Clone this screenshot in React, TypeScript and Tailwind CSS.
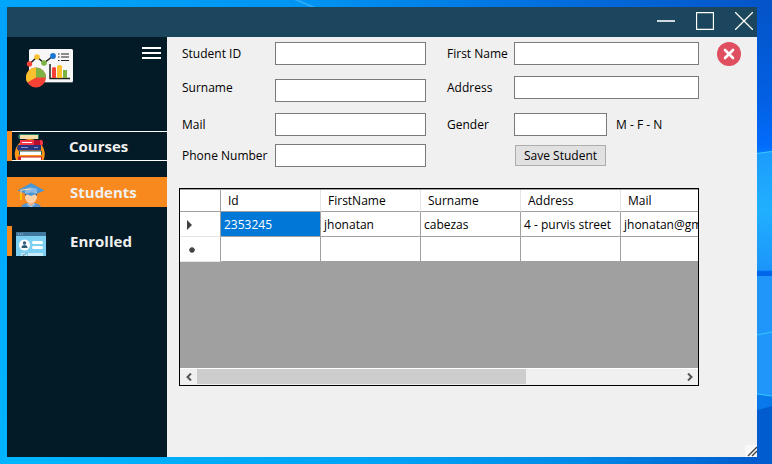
import React from 'react';

const columns = ['Id', 'FirstName', 'Surname', 'Address', 'Mail'];
const student = ['2353245', 'jhonatan', 'cabezas', '4 - purvis street', 'jhonatan@gmail.com'];

function Desktop() {
  return (
    <svg className="absolute inset-0 h-full w-full" viewBox="0 0 772 464" preserveAspectRatio="none" aria-hidden="true">
      <defs>
        <linearGradient id="sky">
          <stop offset="0" stopColor="#00a6fb" />
          <stop offset="0.4" stopColor="#0094f2" />
          <stop offset="0.7" stopColor="#0070e0" />
          <stop offset="1" stopColor="#0454c8" />
        </linearGradient>
        <linearGradient id="ground">
          <stop offset="0" stopColor="#00b6ff" />
          <stop offset="0.5" stopColor="#00a2f6" />
          <stop offset="0.75" stopColor="#008ae8" />
          <stop offset="1" stopColor="#0058cc" />
        </linearGradient>
        <linearGradient id="side" x1="0" y1="0" x2="0" y2="1">
          <stop offset="0" stopColor="#00a2fb" />
          <stop offset="1" stopColor="#00b4ff" />
        </linearGradient>
        <linearGradient id="edge" x1="0" y1="0" x2="0" y2="1">
          <stop offset="0" stopColor="#0454c8" />
          <stop offset="0.2" stopColor="#0260e4" />
          <stop offset="0.3" stopColor="#026cfc" />
          <stop offset="0.33" stopColor="#0a8cfc" />
        </linearGradient>
        <linearGradient id="pane" x1="0" y1="0" x2="0" y2="1">
          <stop offset="0" stopColor="#1c9cfc" />
          <stop offset="0.5" stopColor="#20b0ff" />
          <stop offset="1" stopColor="#1c94fa" />
        </linearGradient>
      </defs>
      <path fill="url(#sky)" d="M0 0h772v232H0z" />
      <path fill="url(#ground)" d="M0 232h772v232H0z" />
      <path fill="url(#side)" d="M0 7h7v457H0z" />
      <path stroke="#2aa8f8" strokeWidth="2" d="m292-2 28 12" />
      <path fill="url(#edge)" d="M757 7h15v464h-15z" />
      <path fill="url(#pane)" d="M757 153l15-2v119h-15z" />
      <path fill="#0068e8" d="M757 271h15v5h-15z" />
      <path fill="#2196fa" d="M757 276h15v120l-15-2z" />
      <path fill="#0878ea" d="M757 394l15 2v10l-15 4z" />
      <path fill="#005ccf" d="M757 410l15-4v58h-15z" />
      <path fill="none" stroke="#36c6ff" d="M757 153.500l15-2M757 335l15-3M757 394l15 2" />
    </svg>
  );
}

function ChartLogo() {
  return (
    <svg width="48" height="40" viewBox="0 0 48 40" aria-hidden="true">
      <rect x="3" y="1" width="44" height="33" rx="1.500" fill="#53636d" />
      <rect x="3" y="0" width="44" height="33" rx="1.500" fill="#f7f7f7" />
      <path d="M3.500 15 11 8l7 6 9-7" fill="none" stroke="#222" strokeWidth="1.500" />
      <circle cx="3.500" cy="15" r="2.700" fill="#f44336" />
      <circle cx="11" cy="8" r="2.800" fill="#fbc02d" />
      <circle cx="18" cy="14" r="2.800" fill="#7cb342" />
      <circle cx="27" cy="7" r="2.900" fill="#1976d2" />
      <path d="M32 5h1.500M35 5h8M32 8h1.500M35 8h8M32 11.500h1.500M35 11.500h8" stroke="#222" strokeWidth="1.100" />
      <path d="M24 15v14.500h20" fill="none" stroke="#222" strokeWidth="1.500" />
      <path d="M26 19q2-2 4 0v10h-4z" fill="#f44336" />
      <path d="M31 17q2.500-2 5 0v12h-5z" fill="#fbc02d" />
      <path d="M37 21h4v8h-4z" fill="#7cb342" />
      <circle cx="10" cy="28.500" r="10" fill="#f44336" />
      <path d="M10 28.500V18.500a10 10 0 0 0-8.700 15z" fill="#fbc02d" />
      <path d="M10 28.500V18.500a10 10 0 0 1 10 10z" fill="#7cb342" />
    </svg>
  );
}

function BooksIcon() {
  return (
    <svg width="32" height="26" viewBox="0 0 32 26" aria-hidden="true">
      <path d="M2 26A15 15 0 1 1 29.500 26z" fill="#ff9419" />
      <path d="M5 0h20v5H5L4 2.500z" fill="#257d68" />
      <path d="M6 1h18v4H6z" fill="#f5dda9" />
      <path d="M6 6h22l1 2v2l-1 1.500H6z" fill="#f23445" />
      <path d="M20 6h6v5.500h-6z" fill="#b30d30" />
      <path d="M8 8.500h10" stroke="#fff" />
      <path d="M4 11h23v5.500H4l-1-2z" fill="#29347e" />
      <path d="M7 13.500h7M20 13.500h4" stroke="#8192ce" />
      <path d="M5 17h23v4H5z" fill="#1b6457" />
      <path d="M6 17.500h21V21H6z" fill="#fff" />
      <path d="M4 22.500h24V26H4z" fill="#c82131" />
      <path d="M7 23.500h20V26H7z" fill="#fff" />
    </svg>
  );
}

function GraduateIcon() {
  return (
    <svg width="32" height="26" viewBox="0 0 32 26" aria-hidden="true">
      <path d="M6 26q1-3 6-4h8q5 1 6 4z" fill="#5394cf" />
      <path d="M13 19h6v4l-3 2-3-2z" fill="#f2b58b" />
      <ellipse cx="16" cy="16" rx="6" ry="6" fill="#ffd1a9" />
      <path d="M10 15V9h12v6l-2-2h-8z" fill="#314a61" />
      <path d="M16 2 29.500 9.500 16 15 2.500 9.500z" fill="#4c96d5" />
      <path d="M10 8q6-3 12 0v5q-6-3-12 0z" fill="#8cbae4" />
      <path d="M16 8 6 9v6" fill="none" stroke="#f5d9a4" />
      <path d="M5 13h2v6H5z" fill="#ffc400" />
      <path d="m12 23 4 3 4-3" fill="none" stroke="#bbdaf3" />
    </svg>
  );
}

function EnrolledIcon() {
  return (
    <svg width="30" height="24" viewBox="0 0 30 24" aria-hidden="true">
      <path d="M0 0h30v24H0z" fill="#7ed0f2" />
      <path d="M0 0h30v4H0z" fill="#41789e" />
      <path d="M2 2h1M4 2h1M6 2h1" stroke="#a4c0d2" />
      <circle cx="8.500" cy="13" r="5.500" fill="#fff" />
      <circle cx="8.500" cy="11" r="1.700" fill="#315d7c" />
      <path d="M5.500 16q0-3 3-3t3 3z" fill="#315d7c" />
      <path d="M17.500 10.500h8M17.500 15.500h8" stroke="#fff" strokeWidth="3" strokeLinecap="round" />
      <path d="M5 21h6v3H5zM12 21h15v3H12z" fill="#c7ebfa" />
      <path d="m6.500 22.500 1.500 1 2.500-2.500" fill="none" stroke="#41789e" />
    </svg>
  );
}

function TextField({ id, className = '' }: { id: string; className?: string }) {
  return <input id={id} type="text" className={`h-[23px] min-w-0 border border-[#7a7a7a] bg-white px-1 outline-none ${className}`} />;
}

function Label({ id, children, className = '' }: { id: string; children: React.ReactNode; className?: string }) {
  return (
    <label htmlFor={id} className={`h-[23px] leading-[23px] whitespace-nowrap ${className}`}>
      {children}
    </label>
  );
}

function TitleBar() {
  return (
    <header className="flex h-[30px] shrink-0 items-center justify-end gap-[21px] bg-[#1c465e] pr-1 pb-[2px]">
      <button aria-label="Minimize">
        <svg width="18" height="18" viewBox="0 0 18 18" stroke="#fff"><path d="M0 9h18" strokeWidth="1.600" /></svg>
      </button>
      <button aria-label="Maximize">
        <svg width="18" height="18" viewBox="0 0 18 18" fill="none" stroke="#fff"><path d="M.5.5h17v17H.5z" strokeWidth="1.300" /></svg>
      </button>
      <button aria-label="Close window">
        <svg width="18" height="18" viewBox="0 0 18 18" stroke="#fff" strokeWidth="1.300"><path d="m0 0 18 18M18 0 0 18" /></svg>
      </button>
    </header>
  );
}

function Sidebar() {
  const item = 'flex h-[30px] w-full items-end overflow-hidden text-left';
  const text = 'flex-1 self-center text-[15px] leading-5 font-bold text-[#f0f0f0]';
  return (
    <aside className="flex w-40 shrink-0 flex-col bg-[#031b26]">
      <div className="flex h-[94px] items-start justify-between pt-[10px] pr-[6px] pl-[19px]">
        <div className="pt-[2px]"><ChartLogo /></div>
        <button aria-label="Toggle menu" className="flex w-[19px] flex-col gap-[3px]">
          <span className="h-[2px] w-full bg-white" />
          <span className="h-[2px] w-full bg-white" />
          <span className="h-[2px] w-full bg-white" />
        </button>
      </div>
      <nav className="flex flex-col">
        <button className={`${item} border-l-[5px] border-[#f7891e]`}>
          <span className="flex h-full flex-1 items-end border-y border-white pl-[2px]">
            <span className="w-[55px]"><BooksIcon /></span>
            <span className={text}>Courses</span>
          </span>
        </button>
        <button className={`${item} mt-4 bg-[#f7891e] pl-2`}>
          <span className="w-[55px]"><GraduateIcon /></span>
          <span className={text}>Students</span>
        </button>
        <button className={`${item} mt-[19px] border-l-[5px] border-[#f7891e] pl-1`}>
          <span className="w-[54px]"><EnrolledIcon /></span>
          <span className={text}>Enrolled</span>
        </button>
      </nav>
    </aside>
  );
}

function StudentForm() {
  return (
    <form className="flex pr-4 pl-[15px]" onSubmit={(e) => e.preventDefault()}>
      <div className="grid flex-1 grid-cols-[93px_151fr_88px_185fr] grid-rows-[34px_37px_31px_23px] items-start">
        <Label id="student-id">Student ID</Label>
        <TextField id="student-id" />
        <Label id="first-name" className="pl-[21px]">First Name</Label>
        <TextField id="first-name" />

        <Label id="surname">Surname</Label>
        <TextField id="surname" className="mt-[3px]" />
        <Label id="address" className="pl-[21px]">Address</Label>
        <TextField id="address" />

        <Label id="mail">Mail</Label>
        <TextField id="mail" />
        <Label id="gender" className="pl-[21px]">Gender</Label>
        <div className="flex items-center gap-[9px]">
          <TextField id="gender" className="w-[93px]" />
          <span>M - F - N</span>
        </div>

        <Label id="phone">Phone Number</Label>
        <TextField id="phone" />
        <div className="col-start-4 flex px-px py-px">
          <button type="submit" className="h-[21px] w-[91px] border border-[#adadad] bg-[#e1e1e1]">Save Student</button>
        </div>
      </div>
      <button type="button" aria-label="Close form" className="ml-[18px] h-6 w-6">
        <svg width="24" height="24" viewBox="0 0 24 24">
          <circle cx="12" cy="12" r="12" fill="#e04f5f" />
          <path d="m8 8 8 8M16 8l-8 8" stroke="#fff" strokeWidth="2.600" strokeLinecap="round" />
        </svg>
      </button>
    </form>
  );
}

function StudentTable() {
  const cell = 'border-r border-b border-[#a0a0a0] bg-white p-0 text-left font-normal whitespace-nowrap';
  return (
    <section className="mt-[21px] mr-[58px] ml-3 flex h-[198px] flex-col border border-black bg-[#a0a0a0]">
      <div className="flex-1 overflow-hidden pt-px">
        <table className="w-[541px] table-fixed border-separate border-spacing-0">
          <colgroup>
            <col className="w-[41px]" />
            {columns.map((c) => <col key={c} className="w-[100px]" />)}
          </colgroup>
          <thead>
            <tr className="h-[22px]">
              <th className={cell} aria-label="Row" />
              {columns.map((c) => (
                <th key={c} className={`${cell} border-r-[#e5e5e5] pl-[7px]`}>{c}</th>
              ))}
            </tr>
          </thead>
          <tbody>
            <tr className="h-[25px]">
              <td className={`${cell} border-b-[#e5e5e5] pt-[2px] pl-[7px]`}>
                <svg width="5" height="10" viewBox="0 0 5 10" fill="#404040"><path d="m0 0 5 5-5 5z" /></svg>
              </td>
              {student.map((v, i) => (
                <td key={v} className={i === 0 ? `${cell} bg-[#0078d7]! pt-[2px] pl-[3px] text-white` : `${cell} pt-[2px] pl-[3px]`}>{v}</td>
              ))}
            </tr>
            <tr className="h-[25px]">
              <td className={`${cell} border-b-[#e5e5e5] pt-[2px] pl-[9px]`}>
                <svg width="6" height="6" viewBox="0 0 6 6" stroke="#404040" strokeWidth="1.300"><path d="M3 0v6M0 3h6M1 1l4 4M5 1 1 5" /></svg>
              </td>
              {columns.map((c) => <td key={c} className={cell} />)}
            </tr>
          </tbody>
        </table>
      </div>
      <div className="flex h-[17px] shrink-0 border-t border-white bg-[#f0f0f0] pb-px">
        <button aria-label="Scroll left" className="flex w-[17px] items-center justify-center">
          <svg width="6" height="8" viewBox="0 0 6 8" fill="none" stroke="#555" strokeWidth="2"><path d="M5 .5 1.500 4 5 7.500" /></svg>
        </button>
        <div className="flex-1"><div className="h-full w-[68%] bg-[#cdcdcd]" /></div>
        <button aria-label="Scroll right" className="flex w-[17px] items-center justify-center">
          <svg width="6" height="8" viewBox="0 0 6 8" fill="none" stroke="#555" strokeWidth="2"><path d="M1 .5 4.500 4 1 7.500" /></svg>
        </button>
      </div>
    </section>
  );
}

export default function App() {
  return (
    <div className="relative flex min-h-screen pt-[7px] pr-[15px] pb-[7px] pl-[7px] font-['Open_Sans','Noto_Sans',sans-serif] text-xs text-black">
      <Desktop />
      <div className="relative flex min-w-0 flex-1 flex-col">
        <TitleBar />
        <div className="flex min-h-0 flex-1">
          <Sidebar />
          <main className="flex min-w-0 flex-1 flex-col bg-[#f0f0f0] pt-[5px]">
            <StudentForm />
            <StudentTable />
            <div className="mt-auto flex justify-end">
              <svg width="12" height="12" viewBox="0 0 12 12" aria-hidden="true">
                <path d="M0 0h12v12H0z" fill="#f8f8f8" />
                <path d="m3 11 9-9M7 11l5-5" stroke="#404040" strokeWidth="1.400" />
              </svg>
            </div>
          </main>
        </div>
      </div>
    </div>
  );
}
